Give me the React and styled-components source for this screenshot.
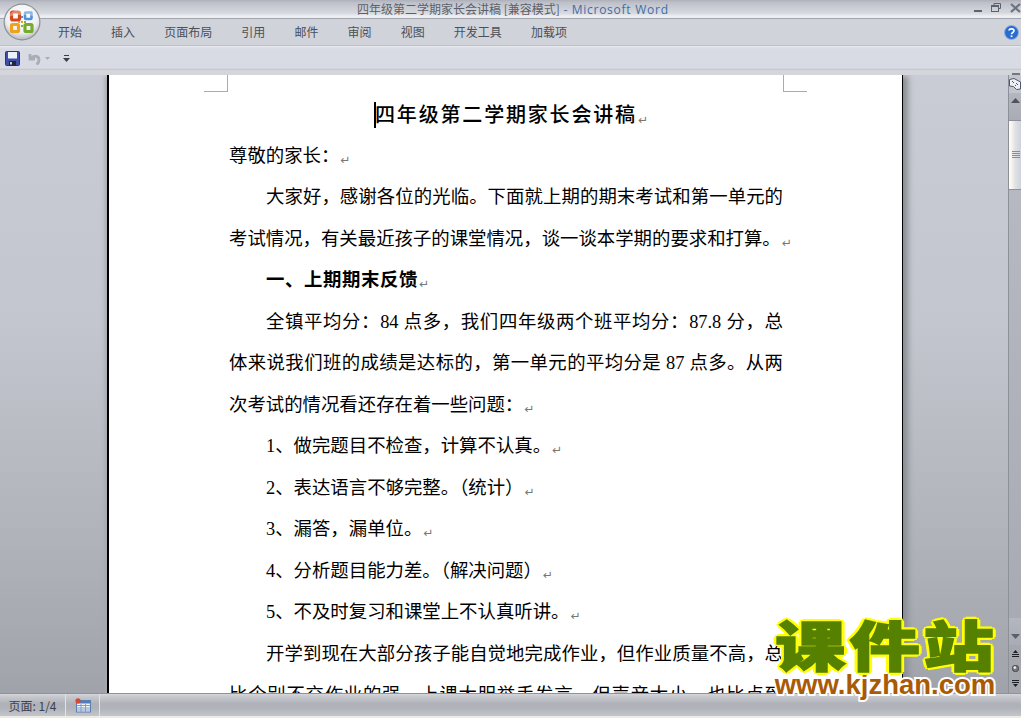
import React from "react";
import styled, { createGlobalStyle } from "styled-components";

const Global = createGlobalStyle`
  html, body { margin: 0; padding: 0; background: #e8e8e0; }
  body { font-family: "Noto Sans CJK SC", sans-serif; overflow: hidden; }
  * { box-sizing: border-box; }
`;

const Frame = styled.div`
  position: relative; width: 1021px; height: 718px; display: flex; flex-direction: column; overflow: hidden;
  background: #e8e8e0;
`;
const TitleBar = styled.div`
  height: 19px; flex: none; display: flex; align-items: flex-start; justify-content: space-between;
  padding-left: 357px;
  background: linear-gradient(#aeb1b9 0, #bfc2ca 3px, #c6c9d0 6px, #d6d8de 13px, #eceef1 16px, #eceef1 17.5px, #a3a6ae 18px);
`;
const TitleText = styled.div`
  font-size: 12px; line-height: 18px; color: #5d6068; white-space: nowrap;
`;
const Dash = styled.span` color: #3c6ea8; margin: 0 4px 0 1px; `;
const Brand = styled.span` color: #3c6ea8; letter-spacing: .75px; font-family: "Open Sans", sans-serif; `;
const WinControls = styled.div`
  display: flex; align-items: flex-start; gap: 9px; padding: 3px 0 0 0; margin-right: 0;
`;
const TabBar = styled.div`
  height: 27px; flex: none; display: flex; align-items: center; gap: 29.1px; padding: 0 2px 0 58px;
  background: #d0d3da; border-bottom: 1px solid #bcc0c8; position: relative;
`;
const Tab = styled.span` font-size: 12px; line-height: 16px; color: #4c4f57; white-space: nowrap; `;
const Help = styled.div` margin-left: auto; display: flex; `;
const Qat = styled.div`
  height: 24px; flex: none; display: flex; align-items: center; padding-left: 5px;
  background: linear-gradient(#dfe2e9 0, #d8dbe3 2px, #d8dbe3 21px, #bfc2c9 23px);
  border-top: 1px solid #e6e8ee;
`;
const QatGap = styled.span` flex: none; width: ${p => p.$w}px; `;
const Strip = styled.div`
  height: 5px; flex: none; display: flex; justify-content: flex-end; align-items: center; padding-right: 1px;
  background: #d4d6dc;
`;
const SplitDash = styled.span` width: 8px; height: 2px; background: #74777f; margin-top: 3px; `;
const Workspace = styled.div`
  flex: 1; min-height: 0; display: flex; overflow: hidden;
`;
const Canvas = styled.div`
  flex: 1; min-width: 0; padding-left: 107px; overflow: hidden;
  background: linear-gradient(#c9ccd4 0, #c3c6ce 40%, #b0b3ba 75%, #a0a3aa 100%);
`;
const Page = styled.div`
  position: relative; width: 796px; background: #fff;
  border-left: 2px solid #000; border-right: 1px solid #000;
  padding: 18px 119px 0 120px;
  box-shadow: 6px 0 6px -1px #8a8d94, -3px 0 4px -1px #a4a7ae;
  color: #000;
  height: 700px;
`;
const Crop = styled.i`
  position: absolute; top: 0; width: 24px; height: 17px; border-bottom: 1px solid #a9abb0;
  ${p => p.$side === "left"
    ? "left: 95px; border-right: 1px solid #a9abb0;"
    : "right: 95px; border-left: 1px solid #a9abb0;"}
`;
const DocTitle = styled.div`
  font-size: 20px; line-height: 41.5px; height: 41.5px; margin-bottom: 1px; letter-spacing: 1.82px; text-align: center; white-space: nowrap; font-weight: 500;
`;
const Caret = styled.span`
  display: inline-block; width: 2px; height: 26px; background: #000; vertical-align: middle; margin: -3px -1px 0 -2px;
`;
const Line = styled.div`
  font-family: "Liberation Serif", "Noto Sans CJK SC", serif;
  font-size: 18.4px; line-height: 41.5px; height: 41.5px; white-space: nowrap;
  padding-left: ${p => (p.$indent ? "37px" : "0")};
  font-weight: ${p => (p.$bold ? 700 : 400)};
  letter-spacing: ${p => (p.$bold ? ".6px" : "0")};
  ${p => p.$fit ? "white-space: normal; text-align: justify; text-align-last: justify;" : ""}
`;
const Mark = styled.span`
  display: inline-block; font-family: "DejaVu Sans", sans-serif; font-size: 12px; line-height: 12px; color: #777; font-weight: 400;
  margin-left: 1px; margin-right: ${p => (p.$over ? "-12px" : "0")}; letter-spacing: 0; vertical-align: -2px;
`;
const Scrollbar = styled.div`
  width: 13px; flex: none; display: flex; flex-direction: column; background: #b6b9c1; border-left: 1px solid #8d9098;
`;
const RulerBtn = styled.div`
  height: 18px; flex: none; display: flex; align-items: center; justify-content: center; background: #c3c6cd; 
`;
const ArrowBtn = styled.div`
  height: 27px; flex: none; display: flex; justify-content: center;
  align-items: ${p => (p.$down ? "flex-end" : "flex-start")};
  padding: ${p => (p.$down ? "0 0 6px" : "5px 0 0")};
  background: linear-gradient(#b4b7bf, #a9acb4);
`;
const Thumb = styled.div`
  height: 70px; flex: none; display: flex; align-items: center; justify-content: center; padding-left: 2px;
  background: linear-gradient(90deg, #fffdf4 0, #f6f4ea 3px, #dfe2e6 6px, #cfd2d8 12px);
  border-top: 1px solid #8d9098; border-bottom: 1px solid #8d9098;
`;
const Track = styled.div`
  flex: 1; background: linear-gradient(#b6b9c1 0, #a8abb3 100%);
`;
const BrowseGroup = styled.div`
  height: 48px; flex: none; display: flex; flex-direction: column; align-items: center; padding-top: 5px; gap: 8px; background: #a4a7ae;
`;
const Status = styled.div`
  height: 23px; flex: none; display: flex; align-items: stretch;
  background: linear-gradient(#d6d8dc 0, #c9cbd0 2px, #aeb1b8 10px, #b0b3ba 14px, #c3c5cb 22px);
  border-top: 1px solid #8f9299;
`;
const StatusCell = styled.div`
  display: flex; align-items: center; justify-content: center;
  width: ${p => p.$w}px; border-right: 1px solid #e1e3e6;
  font-size: 12px; color: #3e4149; font-family: "Noto Sans CJK SC", sans-serif; white-space: nowrap;
`;
const Footer = styled.div` height: 2px; flex: none; background: #ecece2; `;
const OrbWrap = styled.div` position: absolute; left: 3px; top: 3px; width: 38px; height: 38px; `;
const Watermark = styled.div`
  position: absolute; left: 765px; top: 613px; width: 240px; display: flex; flex-direction: column; align-items: center; pointer-events: none;
`;
const WmTop = styled.div`
  font-family: "Noto Sans CJK SC", sans-serif; font-weight: 900; font-size: 54px; line-height: 62px; letter-spacing: 3px; margin-right: -3px;
  color: #568000; -webkit-text-stroke: 1.5px #568000; white-space: nowrap;
  transform: scaleX(1.3);
  text-shadow: 3px 0 0 #ff0, -3px 0 0 #ff0, 0 3px 0 #ff0, 0 -3px 0 #ff0, 2px 2px 0 #ff0, -2px 2px 0 #ff0, 2px -2px 0 #ff0, -2px -2px 0 #ff0;
`;
const WmBottom = styled.div`
  font-family: "Liberation Sans", sans-serif; font-weight: 700; font-size: 27.5px; line-height: 26px; margin-top: -3px;
  color: #a85a05; -webkit-text-stroke: 4px #ffffff; paint-order: stroke fill; white-space: nowrap;
`;

const Orb = () => (
  <svg width="38" height="38" viewBox="0 0 38 38">
    <defs>
      <radialGradient id="orb" cx="50%" cy="35%" r="65%">
        <stop offset="0" stopColor="#ffffff" /><stop offset=".7" stopColor="#eef0f2" /><stop offset="1" stopColor="#b8bbc0" />
      </radialGradient>
    </defs>
    <circle cx="19" cy="19" r="18.5" fill="#8d9096" />
    <circle cx="19" cy="19" r="17.3" fill="url(#orb)" />
    <rect x="8.5" y="9" width="8" height="8" rx="1.5" fill="none" stroke="#d5481c" strokeWidth="3.2" />
    <rect x="22" y="9.5" width="6.5" height="6.5" rx="1" fill="none" stroke="#4f93d8" strokeWidth="2.6" />
    <rect x="8.5" y="21.5" width="7" height="7" rx="1" fill="none" stroke="#efa21e" strokeWidth="3.2" />
    <rect x="22" y="21.5" width="7" height="7" rx="1" fill="none" stroke="#76ab30" strokeWidth="3.2" />
    <g><rect x="18" y="13" width="2" height="2" fill="#5b8fd0" /><rect x="18" y="18" width="2" height="2" fill="#e0a030" /><rect x="21" y="18" width="2" height="2" fill="#84b040" /><rect x="15" y="18" width="2" height="2" fill="#e0a030" /><rect x="18" y="22" width="2" height="2" fill="#84b040" /></g>
    <path d="M5 14a15 13 0 0 1 28 0c-8-3-20-3-28 0z" fill="#ffffff" opacity=".35" />
  </svg>
);
const Save = () => (
  <svg width="15" height="15" viewBox="0 0 15 15">
    <rect x="0.5" y="0.5" width="14" height="14" rx="1" fill="#3f4fa8" stroke="#2b3584" />
    <rect x="3" y="1" width="9" height="6.5" fill="#eef0fa" />
    <rect x="4" y="10" width="7" height="4.5" fill="#20253f" /><rect x="5" y="11" width="2" height="2.5" fill="#c9cbd6" />
  </svg>
);
const Undo = () => (
  <svg width="13" height="13" viewBox="0 0 13 13" fill="none" stroke="#a9adb8" strokeWidth="2.8">
    <path d="M2 2v5h5" strokeLinejoin="miter" /><path d="M2.5 6.5C5 3.5 11 3 11 8c0 2-1 3.5-2.5 4.5" />
  </svg>
);
const Caretdown = ({ c = "#a9adb8", w = 5, h = 3 }) => (
  <svg width={w} height={h} viewBox="0 0 5 3"><path d="M0 0h5L2.5 3z" fill={c} /></svg>
);
const QatMore = () => (
  <svg width="7" height="7" viewBox="0 0 7 7" fill="#3b3e46"><rect x="1" y="0" width="5" height="1" /><path d="M0 3h7L3.5 7z" /></svg>
);
const Minimize = () => <svg width="8" height="10" viewBox="0 0 8 10"><rect y="7" width="8" height="2" fill="#5d6270" /></svg>;
const Restore = () => (
  <svg width="10" height="9" viewBox="0 0 10 9" fill="none" stroke="#5d6270">
    <path d="M3 2.5V.5h6.5v5H7.5" /><rect x=".5" y="2.5" width="7" height="6" /><path d="M1 3.5h6" />
  </svg>
);
const CloseX = () => (
  <svg width="11" height="10" viewBox="0 0 11 10" stroke="#6d7280" strokeWidth="2.2"><path d="M1 1l9 8M10 1l-9 8" /></svg>
);
const HelpIcon = () => (
  <svg width="15" height="15" viewBox="0 0 15 15">
    <circle cx="7.5" cy="7.5" r="7" fill="#2a6bd0" stroke="#8fb0e0" />
    <path d="M5 5.5C5.3 3.4 10 3.2 10 5.7c0 1.8-2.5 1.8-2.5 3.6" fill="none" stroke="#fff" strokeWidth="1.6" />
    <rect x="6.7" y="10.4" width="1.7" height="1.7" fill="#fff" />
  </svg>
);
const RulerIcon = () => (
  <svg width="12" height="12" viewBox="0 0 12 12">
    <path d="M.5 1.5 5 .5 11.5 4v7l-4 .5-3-3-4-.5z" fill="#eef0f5" stroke="#50566c" />
    <path d="M3 3l2 2M7 5l2 2M6 7l1 1" stroke="#50566c" />
  </svg>
);
const ArrowUp = () => <svg width="9" height="5" viewBox="0 0 9 5"><path d="M0 5L4.5 0 9 5z" fill="#50535c" /></svg>;
const ArrowDown = () => <svg width="9" height="5" viewBox="0 0 9 5"><path d="M0 0h9L4.5 5z" fill="#5b5f6a" /></svg>;
const Grip = () => (
  <svg width="8" height="8" viewBox="0 0 8 8" fill="#8a8d95"><rect y="0" width="8" height="1" /><rect y="2" width="8" height="1" /><rect y="4" width="8" height="1" /><rect y="6" width="8" height="1" /></svg>
);
const PrevBrowse = () => (
  <svg width="7" height="7" viewBox="0 0 7 7" fill="#1d1f24"><path d="M3.5 0 6 3H1z" /><rect x="0" y="4" width="7" height="1" /><rect y="6" width="7" height="1" /></svg>
);
const NextBrowse = () => (
  <svg width="7" height="7" viewBox="0 0 7 7" fill="#1d1f24"><rect y="0" width="7" height="1" /><rect y="2" width="7" height="1" /><path d="M1 4h5L3.5 7z" /></svg>
);
const Dot = () => (
  <svg width="7" height="7" viewBox="0 0 7 7"><circle cx="3.5" cy="3.5" r="3.2" fill="#777a80" stroke="#222" strokeWidth=".6" /><circle cx="2.8" cy="2.6" r="1.3" fill="#eee" /></svg>
);
const MacroIcon = () => (
  <svg width="16" height="15" viewBox="0 0 16 15">
    <rect x="1.5" y="2.5" width="14" height="11.5" fill="#f0f3f8" stroke="#5a7fb0" />
    <rect x="2" y="3" width="13" height="2.5" fill="#4f7ec0" />
    <path d="M2 7.5h13M2 10h13M2 12h13M6 6v8M10.5 6v8" stroke="#7f9fc8" />
    <circle cx="3" cy="2.8" r="2.6" fill="#d84a30" />
  </svg>
);

const m = <Mark>↵</Mark>;

const tabs = ["开始", "插入", "页面布局", "引用", "邮件", "审阅", "视图", "开发工具", "加载项"];

export default function App() {
  return (
    <Frame>
      <Global />
      <TitleBar>
        <TitleText>四年级第二学期家长会讲稿 [兼容模式] <Dash>-</Dash><Brand>Microsoft Word</Brand></TitleText>
        <WinControls><Minimize /><Restore /><CloseX /></WinControls>
      </TitleBar>
      <TabBar>
        {tabs.map(t => <Tab key={t}>{t}</Tab>)}
        <Help><HelpIcon /></Help>
      </TabBar>
      <Qat>
        <Save />
        <QatGap $w={8} />
        <Undo />
        <QatGap $w={4} />
        <Caretdown />
        <QatGap $w={13} />
        <QatMore />
      </Qat>
      <Strip><SplitDash /></Strip>
      <Workspace>
        <Canvas>
          <Page>
            <Crop $side="left" />
            <Crop $side="right" />
            <DocTitle><Caret />四年级第二学期家长会讲稿<Mark $over>↵</Mark></DocTitle>
            <Line>尊敬的家长：{m}</Line>
            <Line $indent $fit>大家好，感谢各位的光临。下面就上期的期末考试和第一单元的</Line>
            <Line>考试情况，有关最近孩子的课堂情况，谈一谈本学期的要求和打算。{m}</Line>
            <Line $indent $bold>一、上期期末反馈{m}</Line>
            <Line $indent $fit>全镇平均分：84 点多，我们四年级两个班平均分：87.8 分，总</Line>
            <Line $fit>体来说我们班的成绩是达标的，第一单元的平均分是 87 点多。从两</Line>
            <Line>次考试的情况看还存在着一些问题：{m}</Line>
            <Line $indent>1、做完题目不检查，计算不认真。{m}</Line>
            <Line $indent>2、表达语言不够完整。（统计）{m}</Line>
            <Line $indent>3、漏答，漏单位。{m}</Line>
            <Line $indent>4、分析题目能力差。（解决问题）{m}</Line>
            <Line $indent>5、不及时复习和课堂上不认真听讲。{m}</Line>
            <Line $indent $fit>开学到现在大部分孩子能自觉地完成作业，但作业质量不高，总</Line>
            <Line $fit>比个别不交作业的强，上课大胆举手发言，但声音太小，也比点到</Line>
          </Page>
        </Canvas>
        <Scrollbar>
          <RulerBtn><RulerIcon /></RulerBtn>
          <ArrowBtn><ArrowUp /></ArrowBtn>
          <Thumb><Grip /></Thumb>
          <Track />
          <ArrowBtn $down><ArrowDown /></ArrowBtn>
          <BrowseGroup><PrevBrowse /><Dot /><NextBrowse /></BrowseGroup>
        </Scrollbar>
      </Workspace>
      <Status>
        <StatusCell $w={66}>页面: 1/4</StatusCell>
        <StatusCell $w={34}><MacroIcon /></StatusCell>
      </Status>
      <Footer />
      <OrbWrap><Orb /></OrbWrap>
      <Watermark>
        <WmTop>课件站</WmTop>
        <WmBottom>www.kjzhan.com</WmBottom>
      </Watermark>
    </Frame>
  );
}
